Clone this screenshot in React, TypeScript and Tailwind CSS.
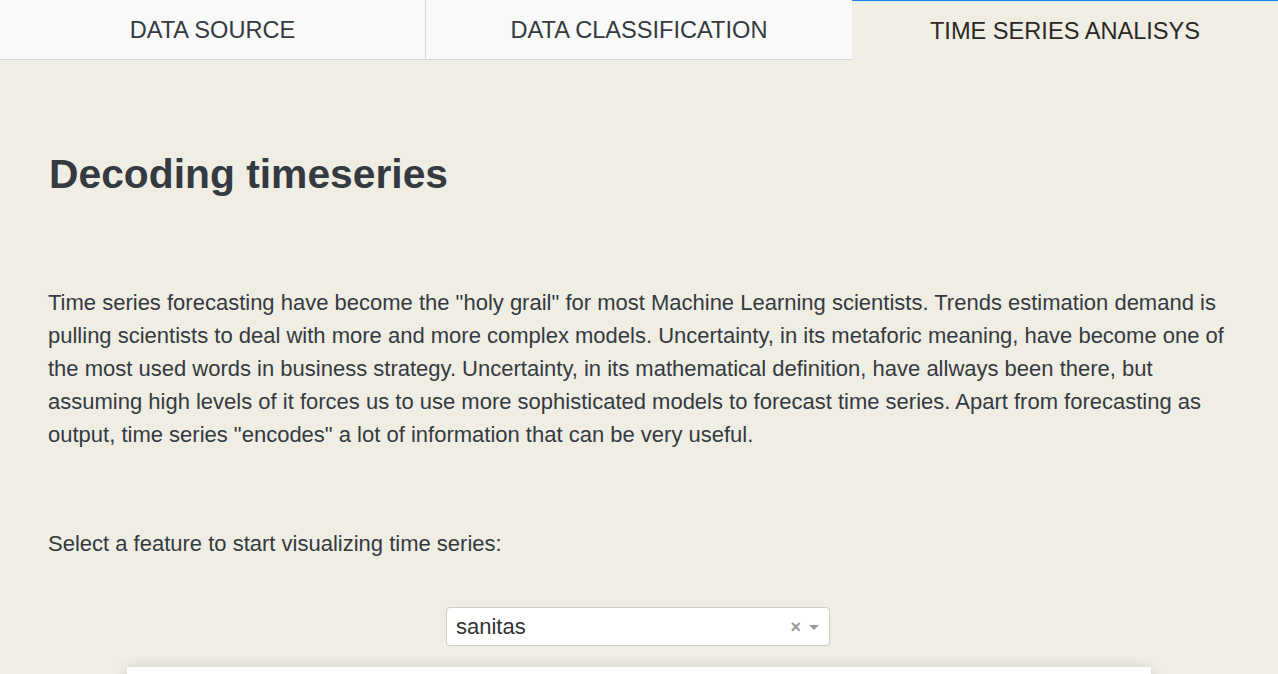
import React from "react";

export default function App() {
  const font = { fontFamily: '"Liberation Sans", Arial, Helvetica, sans-serif' };
  return (
    <div className="h-[674px] w-full bg-[#f0ede5] overflow-hidden" style={font}>
      <div className="grid grid-cols-3 h-[60px]">
        <div className="flex items-center justify-center bg-[#f9f9f9] border-b border-r border-[#d6d6d6] pt-[2px] text-[23.6px] text-[#343a40]">
          DATA SOURCE
        </div>
        <div className="flex items-center justify-center bg-[#f9f9f9] border-b border-[#d6d6d6] pt-[2px] text-[23.6px] text-[#343a40]">
          DATA CLASSIFICATION
        </div>
        <div className="flex items-center justify-center border-t border-[#1a80f0] pt-[3px] text-[23.6px] text-[#2b2723]">
          TIME SERIES ANALISYS
        </div>
      </div>
      <div className="px-[48px] text-[#343a40]">
        <h1 className="mt-[90px] text-[40.8px] leading-[48px] font-bold pl-[1px]">Decoding timeseries</h1>
        <p className="mt-[88px] text-[22px] leading-[33px]">
          Time series forecasting have become the "holy grail" for most Machine Learning scientists. Trends estimation demand is pulling scientists to deal with more and more complex models. Uncertainty, in its metaforic meaning, have become one of the most used words in business strategy. Uncertainty, in its mathematical definition, have allways been there, but assuming high levels of it forces us to use more sophisticated models to forecast time series. Apart from forecasting as output, time series "encodes" a lot of information that can be very useful.
        </p>
        <p className="mt-[76px] text-[22px] leading-[33px]">Select a feature to start visualizing time series:</p>
      </div>
      <div className="mt-[47px] flex justify-center">
        <div className="w-[384px] h-[39px] bg-white border border-[#cccccc] rounded-[4px] flex items-center pl-[9px] pr-[10px] -translate-x-[1px]">
          <span className="flex-1 text-[22px] text-[#333333]">sanitas</span>
          <span className="text-[#999999] text-[18px] font-bold leading-none mr-[8px]">×</span>
          <svg width="10" height="6" viewBox="0 0 10 6" className="mt-[2px]"><path d="M0 0 L10 0 L5 5 Z" fill="#999999" /></svg>
        </div>
      </div>
      <div className="mt-[21px] flex justify-center">
        <div className="w-[1024px] h-[200px] bg-white shadow-[0_0_12px_rgba(0,0,0,0.12)]"></div>
      </div>
    </div>
  );
}
